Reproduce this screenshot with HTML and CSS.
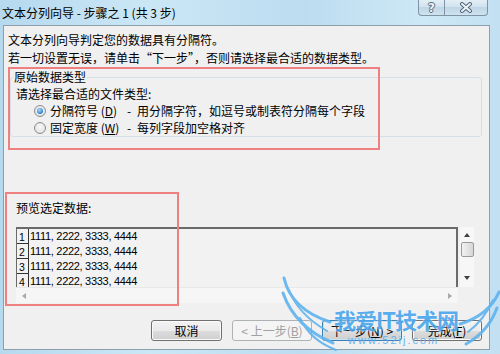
FILE: index.html
```html
<!DOCTYPE html>
<html>
<head>
<meta charset="utf-8">
<link rel="stylesheet" href="styles.css">
</head>
<body>
<div class="titlebar">
  <div class="title">文本分列向导 - 步骤之 1 (共 3 步)</div>
  <div class="caption">
    <div class="cap-btn help">?</div>
    <div class="cap-btn close">
      <svg width="14" height="11" viewBox="0 0 14 11"><path d="M3 2 L11 9 M11 2 L3 9" stroke="#56687a" stroke-width="4" stroke-linecap="round"/><path d="M3 2 L11 9 M11 2 L3 9" stroke="#eef3f7" stroke-width="2" stroke-linecap="round"/></svg>
    </div>
  </div>
</div>
<div class="client">
  <p class="intro">文本分列向导判定您的数据具有分隔符。</p>
  <p class="intro">若一切设置无误，请单击“下一步”，否则请选择最合适的数据类型。</p>
  <fieldset class="group">
    <legend>原始数据类型</legend>
    <div class="prompt">请选择最合适的文件类型:</div>
    <div class="choices">
      <span class="radio checked"></span><span class="opt">分隔符号 (<u>D</u>)</span><span class="desc"><span class="dash">-</span>用分隔字符，如逗号或制表符分隔每个字段</span>
      <span class="radio"></span><span class="opt">固定宽度 (<u>W</u>)</span><span class="desc"><span class="dash">-</span>每列字段加空格对齐</span>
    </div>
  </fieldset>
  <div class="preview-label">预览选定数据:</div>
  <div class="preview">
    <div class="sheet">
      <div class="row"><span class="num">1</span><span class="data">1111, 2222, 3333, 4444</span></div>
      <div class="row"><span class="num">2</span><span class="data">1111, 2222, 3333, 4444</span></div>
      <div class="row"><span class="num">3</span><span class="data">1111, 2222, 3333, 4444</span></div>
      <div class="row"><span class="num">4</span><span class="data">1111, 2222, 3333, 4444</span></div>
    </div>
    <div class="vscroll">
      <span class="arrow up"></span>
      <span class="thumb"></span>
      <span class="arrow down"></span>
    </div>
    <div class="hscroll">
      <span class="harrow left"></span>
      <span class="harrow right"></span>
    </div>
    <div class="corner"></div>
  </div>
  <div class="buttons">
    <button class="btn cancel">取消</button>
    <button class="btn back" disabled>&lt; 上一步(<u>B</u>)</button>
    <button class="btn next">下一步(<u>N</u>) &gt;</button>
    <button class="btn finish">完成(<u>F</u>)</button>
  </div>
</div>

<div class="mark mark-type"></div>
<div class="mark mark-preview"></div>

<div class="watermark">
  <svg class="wings" width="230" height="84" viewBox="270 270 230 84">
    <g fill="none" stroke="#5fb3ee" stroke-linecap="round">
      <path d="M284 278 Q291 309 330 322" stroke-width="3"/>
      <path d="M289 290 Q298 314 327 331" stroke-width="2"/>
      <path d="M283 293 Q295 327 333 343" stroke-width="3"/>
      <path d="M300 318 Q310 340 336 350" stroke-width="2"/>
      <path d="M499 292 Q489 315 460 324" stroke-width="3"/>
      <path d="M497 308 Q488 332 466 344" stroke-width="3"/>
      <path d="M493 300 Q484 320 468 332" stroke-width="2"/>
    </g>
  </svg>
  <div class="wm-title">我爱IT技术网</div>
  <div class="wm-url">www.52ij.com</div>
</div>
</body>
</html>
```

FILE: styles.css
```css
* { box-sizing: border-box; }
html, body { margin: 0; padding: 0; }
body {
  width: 500px;
  height: 354px;
  overflow: hidden;
  position: relative;
  background: linear-gradient(90deg, #b6d9ee 0%, #cbe7f6 30%, #bddcf0 60%, #cde8f6 85%, #c2e0f2 100%);
  font-family: "Noto Sans CJK SC", "Noto Sans", sans-serif;
  font-size: 12px;
  color: #000;
}

/* title bar */
.titlebar {
  height: 25px;
  display: flex;
  align-items: flex-start;
}
.title {
  padding-left: 2px;
  line-height: 25px;
  font-size: 12px;
  color: #000;
}
.caption {
  margin-left: auto;
  margin-right: 12px;
  display: flex;
}
.cap-btn {
  height: 16px;
  border: 1px solid #7f93a6;
  border-top: none;
  background: linear-gradient(#e2eef6, #cfe2ee 50%, #bfd6e6 50%, #cfe3ef);
  display: flex;
  align-items: center;
  justify-content: center;
}
.help {
  width: 26px;
  border-radius: 0 0 0 4px;
  border-right: none;
  font-family: "DejaVu Sans", sans-serif;
  font-weight: bold;
  font-size: 12px;
  color: #eef3f7;
  text-shadow: 1px 0 0 #56687a, -1px 0 0 #56687a, 0 1px 0 #56687a, 0 -1px 0 #56687a;
}
.close {
  width: 44px;
  border-radius: 0 0 4px 0;
}

/* client area */
.client {
  margin-left: 3px;
  width: 487px;
  height: 325px;
  border: 1px solid #8e9eab;
  background: #f0f0f0;
  padding-top: 5px;
}
.intro {
  margin: 0 0 0 4px;
  line-height: 18px;
}

.group {
  margin: 2px 0 0 6px;
  width: 472px;
  padding: 0;
  border: 1px solid #d5dfe5;
  border-radius: 3px;
}
.group legend {
  margin-left: 2px;
  padding: 0 1px;
  line-height: 16px;
}
.prompt {
  margin-left: 5px;
  line-height: 17px;
}
.choices {
  display: grid;
  grid-template-columns: 16px 77px auto;
  grid-auto-rows: 17px;
  align-items: center;
  margin-left: 23px;
}
.radio {
  width: 12px;
  height: 12px;
  border-radius: 50%;
  border: 1px solid #8b8c8d;
  background: radial-gradient(circle at 50% 40%, #f8f8f8, #dcdcdc);
  display: flex;
  align-items: center;
  justify-content: center;
}
.radio.checked::after {
  content: "";
  width: 6px;
  height: 6px;
  border-radius: 50%;
  background: radial-gradient(circle at 40% 35%, #a9dbfb, #2a7fd4 70%);
}
.opt, .desc { line-height: 17px; white-space: nowrap; }
.dash {
  display: inline-block;
  width: 10px;
}

/* preview */
.preview-label {
  margin: 63px 0 0 12px;
  line-height: 16px;
}
.preview {
  margin: 11px 0 0 12px;
  width: 458px;
  height: 76px;
  display: grid;
  grid-template-columns: 442px 16px;
  grid-template-rows: 60px 16px;
}
.sheet {
  border-top: 2px solid #6a6a6a;
  border-left: 1px solid #6a6a6a;
  border-right: 2px solid #6a6a6a;
  overflow: hidden;
  background: #f2f2f2;
}
.row {
  display: flex;
  height: 15px;
}
.num {
  width: 12px;
  flex: none;
  border-right: 1px solid #333;
  border-bottom: 1px solid #333;
  font-family: "Liberation Sans", Arial, sans-serif;
  font-size: 10.5px;
  line-height: 17px;
  padding-left: 2px;
  overflow: hidden;
}
.data {
  font-family: "Liberation Sans", Arial, sans-serif;
  font-size: 11px;
  line-height: 15px;
  letter-spacing: -0.3px;
  padding-left: 1px;
  white-space: nowrap;
}
.vscroll {
  margin-left: 2px;
  background: #f7f7f7;
  display: flex;
  flex-direction: column;
  align-items: center;
  padding-top: 6px;
}
.arrow {
  width: 0;
  height: 0;
  border-left: 3.5px solid transparent;
  border-right: 3.5px solid transparent;
}
.arrow.up { border-bottom: 4px solid #404040; }
.arrow.down { border-top: 4px solid #404040; margin-top: 19px; }
.thumb {
  margin-top: 5px;
  width: 13px;
  height: 15px;
  border: 1px solid #999;
  border-radius: 2px;
  background: linear-gradient(90deg, #f2f2f2, #e4e4e4 50%, #d6d6d6);
}
.hscroll {
  background: #f6f6f6;
  border-top: 1px solid #e8e8e8;
  display: flex;
  align-items: center;
  justify-content: space-between;
  padding: 0 6px;
}
.harrow {
  width: 0;
  height: 0;
  border-top: 3.5px solid transparent;
  border-bottom: 3.5px solid transparent;
}
.harrow.left { border-right: 4px solid #a8a8a8; }
.harrow.right { border-left: 4px solid #a8a8a8; }
.corner { background: #f0f0f0; }

/* buttons */
.buttons {
  margin-top: 17px;
  display: flex;
  justify-content: flex-end;
  gap: 10px;
  padding-right: 7px;
}
.btn {
  height: 21px;
  width: 80px;
  padding: 0;
  border: 1px solid #707070;
  border-radius: 3px;
  background: linear-gradient(#f2f2f2 0%, #ebebeb 50%, #dddddd 50%, #cfcfcf 100%);
  box-shadow: inset 0 0 0 1px #fbfbfb;
  font-family: "Noto Sans CJK SC", "Noto Sans", sans-serif;
  font-size: 12px;
  line-height: 18px;
  color: #000;
}
.btn.cancel { width: 71px; }
.btn.finish { width: 70px; }
.btn.back {
  border-color: #adb2b5;
  background: #f4f4f4;
  box-shadow: none;
  color: #a0a0a0;
}
.btn.next {
  border-color: #3c7fb1;
  box-shadow: inset 0 0 0 1px #c4e5f6;
}

/* annotation boxes */
.mark {
  position: absolute;
  border: 2px solid #ee8080;
}
.mark-type { left: 8px; top: 67px; width: 372px; height: 83px; }
.mark-preview { left: 5px; top: 192px; width: 174px; height: 114px; }

/* watermark */
.watermark {
  position: absolute;
  left: 270px;
  top: 270px;
  width: 230px;
  height: 84px;
  pointer-events: none;
}
.wings { position: absolute; left: 0; top: 0; opacity: 0.9; }
.wm-title {
  position: absolute;
  left: 64px;
  top: 36px;
  font-family: "Noto Sans CJK SC", sans-serif;
  font-weight: bold;
  font-size: 22px;
  line-height: 26px;
  letter-spacing: -1px;
  color: #4aa6ec;
  text-shadow: 0 0 2px #ffffff;
  opacity: 0.9;
}
.wm-url {
  position: absolute;
  left: 78px;
  top: 64px;
  font-family: "Liberation Sans", Arial, sans-serif;
  font-size: 11px;
  line-height: 12px;
  letter-spacing: 2px;
  color: #5ab0ec;
  opacity: 0.9;
}
```
